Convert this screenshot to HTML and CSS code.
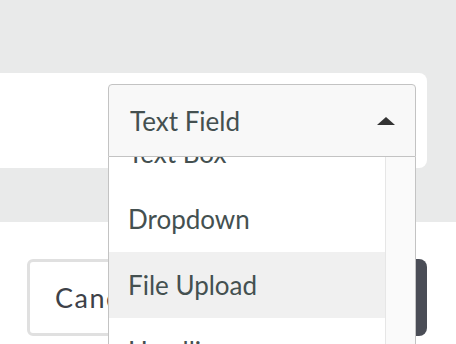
FILE: index.html
```html
<!DOCTYPE html>
<html>
<head>
<meta charset="utf-8">
<link rel="stylesheet" href="styles.css">
</head>
<body>
<div class="page">
  <section class="top">
    <div class="card"></div>
  </section>
  <section class="bottom">
    <div class="actions">
      <button class="btn btn-cancel">Cancel</button>
      <button class="btn btn-primary">Save</button>
    </div>
  </section>

  <div class="select">
    <div class="select-head">
      <span class="select-value">Text Field</span>
      <span class="caret"></span>
    </div>
    <div class="select-body">
      <div class="options">
        <ul class="option-list">
          <li class="option">Text Box</li>
          <li class="option">Dropdown</li>
          <li class="option is-active">File Upload</li>
          <li class="option">Headline</li>
        </ul>
      </div>
      <div class="scrolltrack"></div>
    </div>
  </div>
</div>
</body>
</html>
```

FILE: styles.css
```css
html, body {
  margin: 0;
  padding: 0;
}
body {
  width: 456px;
  height: 344px;
  overflow: hidden;
  background: #ffffff;
  font-family: Lato, "Open Sans", sans-serif;
}
.page {
  position: relative;
  width: 456px;
  height: 344px;
  overflow: hidden;
}
.top {
  height: 222px;
  background: #e9eaea;
  padding-top: 73px;
  box-sizing: border-box;
}
.card {
  height: 95px;
  margin-right: 29px;
  background: #ffffff;
  border-radius: 0 8px 8px 0;
}
.bottom {
  padding: 37px 29px 0 27px;
}
.actions {
  display: flex;
  justify-content: space-between;
}
.btn {
  height: 77px;
  font-family: Lato, "Open Sans", sans-serif;
  font-size: 27px;
  box-sizing: border-box;
}
.btn-cancel {
  width: 150px;
  border: 3px solid #e0e0e0;
  border-radius: 6px;
  background: #ffffff;
  color: #3d4148;
  text-align: left;
  padding: 0 0 0 25px;
  letter-spacing: 1.5px;
}
.btn-primary {
  width: 150px;
  border: none;
  border-radius: 8px;
  background: #4a4d56;
  color: #ffffff;
}
.select {
  position: absolute;
  left: 108px;
  top: 84px;
  width: 308px;
  height: 270px;
  display: flex;
  flex-direction: column;
}
.select-head {
  height: 73px;
  box-sizing: border-box;
  border: 1px solid #c3c3c3;
  border-radius: 4px 4px 0 0;
  background: #f8f8f8;
  display: flex;
  align-items: center;
  justify-content: space-between;
  padding: 0 20px 0 21px;
}
.select-value {
  font-size: 26px;
  color: #445050;
}
.caret {
  width: 0;
  height: 0;
  border-left: 9px solid transparent;
  border-right: 9px solid transparent;
  border-bottom: 8px solid #333333;
}
.select-body {
  flex: 1;
  display: flex;
  border-left: 1px solid #c3c3c3;
  border-right: 1px solid #c3c3c3;
  background: #ffffff;
  min-height: 0;
}
.options {
  flex: 1;
  overflow: hidden;
}
.option-list {
  list-style: none;
  margin: -37px 0 0 0;
  padding: 0;
}
.option {
  height: 66px;
  display: flex;
  align-items: center;
  padding-left: 19px;
  font-size: 26px;
  color: #445050;
}
.option.is-active {
  background: #f0f0f0;
}
.scrolltrack {
  width: 29px;
  border-left: 1px solid #e6e6e6;
  background: #fafafa;
}
```
